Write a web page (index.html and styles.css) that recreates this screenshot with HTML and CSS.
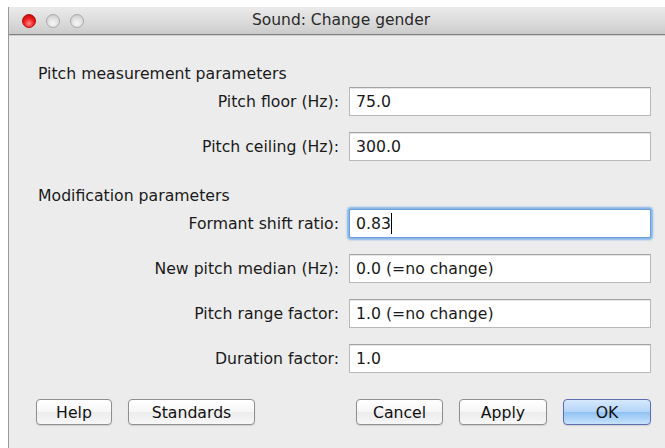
FILE: index.html
```html
<!DOCTYPE html>
<html lang="en">
<head>
<meta charset="utf-8">
<title>Sound: Change gender</title>
<link rel="stylesheet" href="styles.css">
</head>
<body>
<div class="window">
  <div class="titlebar">
    <div class="lights">
      <span class="light close"></span>
      <span class="light"></span>
      <span class="light"></span>
    </div>
    <div class="title">Sound: Change gender</div>
  </div>
  <div class="content">
    <div class="heading">Pitch measurement parameters</div>
    <div class="row first">
      <label class="label">Pitch floor (Hz):</label>
      <div class="field">75.0</div>
    </div>
    <div class="row">
      <label class="label">Pitch ceiling (Hz):</label>
      <div class="field">300.0</div>
    </div>

    <div class="heading second">Modification parameters</div>
    <div class="row first">
      <label class="label">Formant shift ratio:</label>
      <div class="field focused">0.83<span class="caret"></span></div>
    </div>
    <div class="row">
      <label class="label">New pitch median (Hz):</label>
      <div class="field">0.0 (=no change)</div>
    </div>
    <div class="row">
      <label class="label">Pitch range factor:</label>
      <div class="field">1.0 (=no change)</div>
    </div>
    <div class="row">
      <label class="label">Duration factor:</label>
      <div class="field">1.0</div>
    </div>

    <div class="buttons">
      <div class="group">
        <button class="btn help">Help</button>
        <button class="btn standards">Standards</button>
      </div>
      <div class="group">
        <button class="btn cancel">Cancel</button>
        <button class="btn apply">Apply</button>
        <button class="btn ok">OK</button>
      </div>
    </div>
  </div>
</div>
</body>
</html>
```

FILE: styles.css
```css
html, body {
  margin: 0;
  padding: 0;
  background: #ffffff;
  height: 100%;
  overflow: hidden;
}

body {
  font-family: "DejaVu Sans", "Liberation Sans", sans-serif;
  font-size: 15.7px;
  color: #1a1a1a;
}

.window {
  margin: 7px 0 0 8px;
  width: 680px;
  height: 460px;
  background: #ececec;
  border-left: 1px solid #9a9a9a;
  box-sizing: border-box;
}

/* title bar with traffic lights */
.titlebar {
  height: 27px;
  background: linear-gradient(#ebebeb, #d9d9d9 60%, #cbcbcb);
  border-bottom: 1px solid #7f7f7f;
  box-shadow: 0 1px 0 #cfcfcf;
  display: flex;
  align-items: center;
  position: relative;
}

.lights {
  display: flex;
  gap: 10px;
  padding-left: 13px;
}

.light {
  width: 14px;
  height: 14px;
  border-radius: 50%;
  box-sizing: border-box;
  border: 1px solid #a9a9a9;
  background: radial-gradient(circle at 50% 70%, #f6f6f6 0%, #e2e2e2 45%, #c4c4c4 100%);
}

.light.close {
  border-color: #b40d0d;
  background: radial-gradient(circle at 50% 70%, #ff8a8a 0%, #f02020 45%, #b00000 100%);
}

.title {
  position: absolute;
  left: 0;
  top: 0;
  width: 664px;
  line-height: 27px;
  text-align: center;
  font-size: 15.5px;
  color: #2a2a2a;
  pointer-events: none;
}

/* form body */
.content {
  padding: 29px 0 0 27px;
}

.heading {
  line-height: 20px;
  height: 20px;
  padding-left: 2px;
}

.heading.second {
  margin-top: 25px;
}

.row {
  display: grid;
  grid-template-columns: 303px 302px;
  column-gap: 10px;
  align-items: center;
  margin-top: 16px;
  height: 29px;
}

.row.first {
  margin-top: 3px;
}

.label {
  text-align: right;
  white-space: nowrap;
}

.field {
  height: 29px;
  box-sizing: border-box;
  background: #ffffff;
  border: 1px solid #b9b9b9;
  border-top-color: #a3a3a3;
  box-shadow: inset 0 1px 0 #e6e6e6;
  padding-left: 6px;
  line-height: 27px;
  white-space: nowrap;
}

.field.focused {
  border: 1px solid #6c9fdc;
  box-shadow: 0 0 2px 2px #86b4ea;
  border-radius: 2px;
}

.caret {
  display: inline-block;
  width: 1px;
  height: 21px;
  background: #000;
  vertical-align: -5px;
}

/* bottom button bar */
.buttons {
  display: flex;
  justify-content: space-between;
  margin-top: 26px;
  width: 615px;
}

.group {
  display: flex;
  gap: 16px;
}

.btn {
  font-family: inherit;
  font-size: 15.7px;
  color: #111;
  height: 26px;
  padding: 0;
  border: 1px solid #8f8f8f;
  border-radius: 4px;
  background: linear-gradient(#ffffff, #f6f6f6 50%, #ececec 52%, #f7f7f7);
  box-shadow: 0 1px 1px rgba(0, 0, 0, 0.12);
}

.help { width: 76px; }
.standards { width: 127px; }
.cancel { width: 87px; }
.apply { width: 88px; }

.ok {
  width: 88px;
  border-color: #5f6cb2;
  background: linear-gradient(#d6e8fc, #b3d5f8 50%, #92c3f3 52%, #c6e3fc);
}
```
